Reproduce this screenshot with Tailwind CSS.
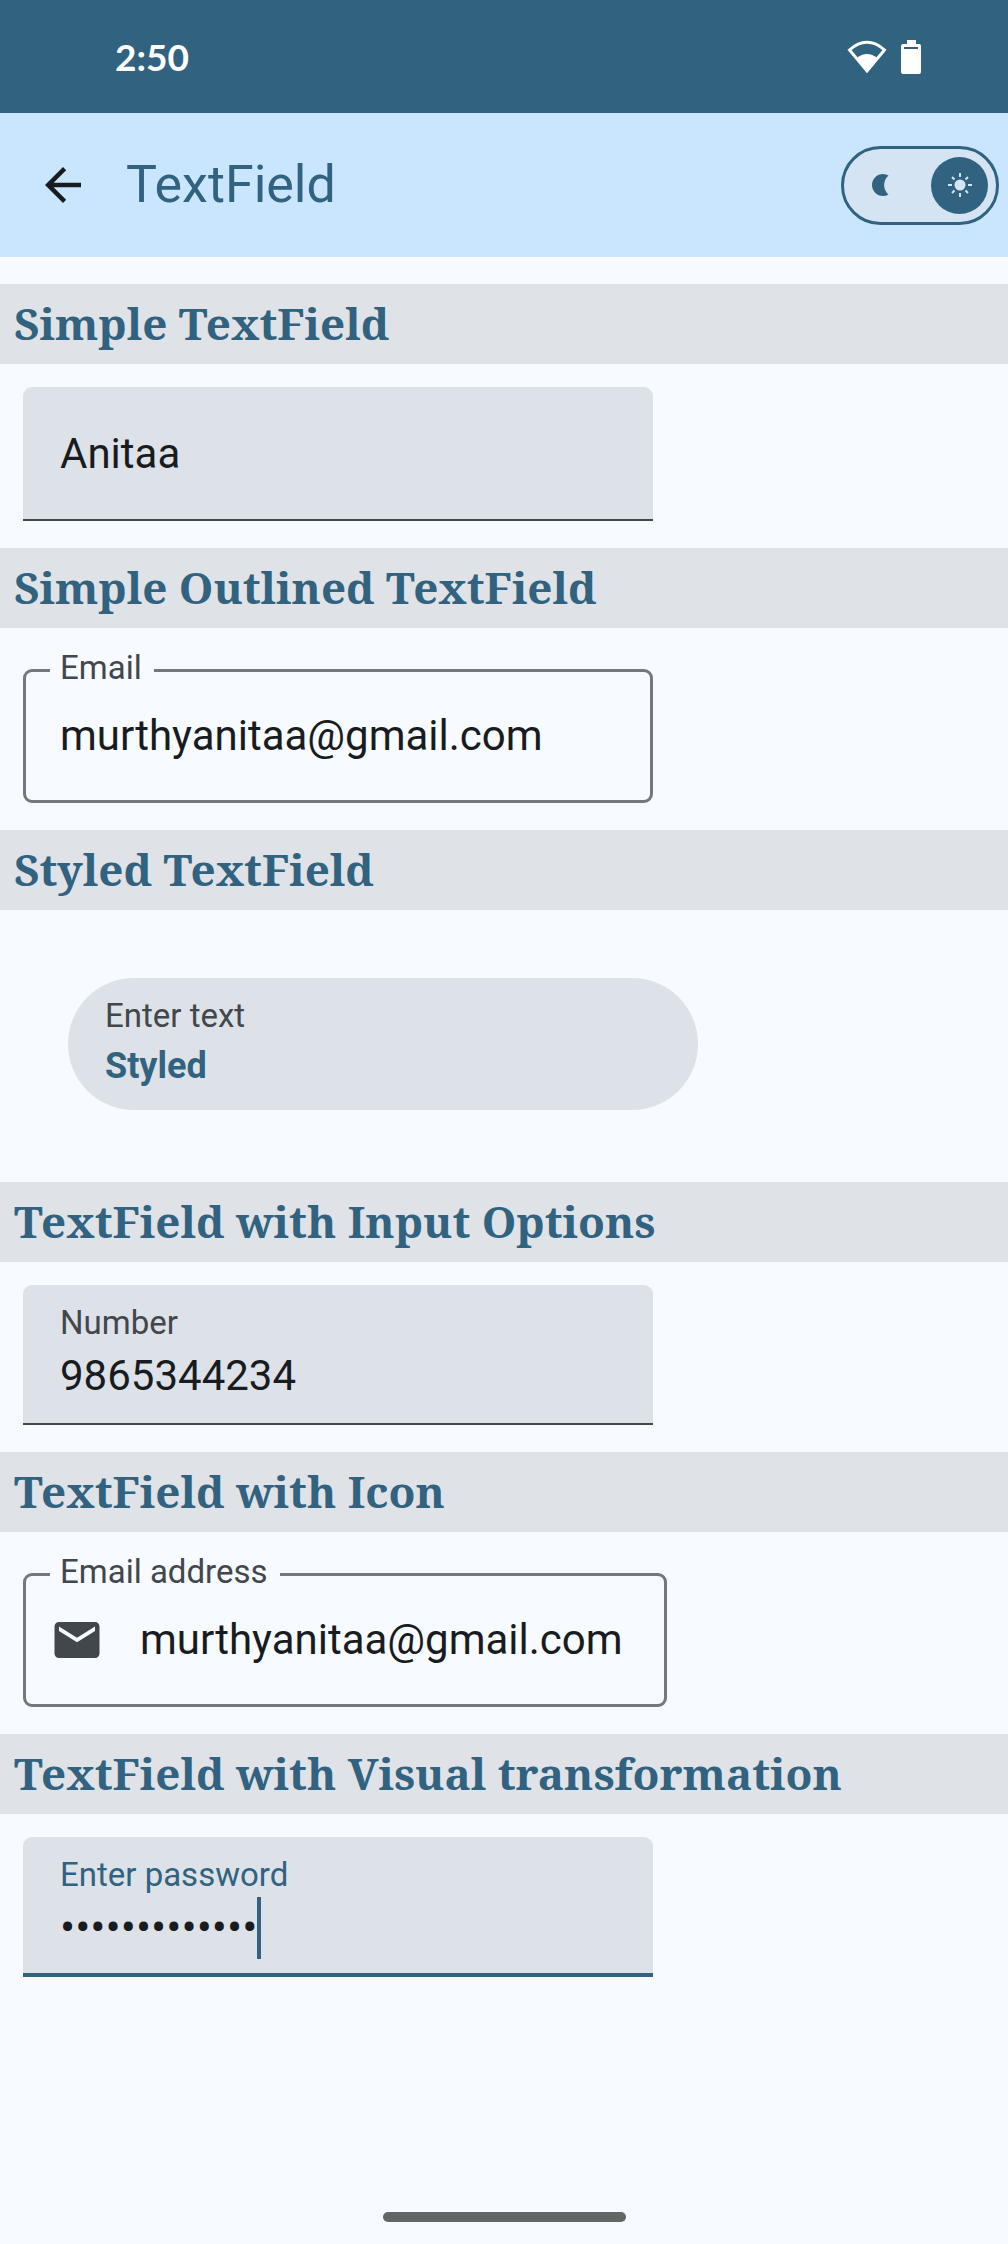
<!DOCTYPE html>
<html lang="en">
<head>
<meta charset="utf-8">
<meta name="viewport" content="width=device-width, initial-scale=1">
<title>TextField</title>
<script src="https://cdn.jsdelivr.net/npm/@tailwindcss/browser@4"></script>
</head>
<body class="flex min-h-screen flex-col bg-[#f7faff] font-['Roboto',sans-serif] text-[#181c20]">

  <!-- System status bar -->
  <div class="flex h-[113px] items-center justify-between bg-[#316380] pr-[86px] pl-[115px] text-white">
    <span class="font-['Lato',sans-serif] text-[37px] leading-[40px] font-bold">2:50</span>
    <div class="flex items-center gap-3">
      <svg class="h-[36px] w-[42px]" viewBox="0 0 42 36" fill="none" aria-hidden="true">
        <path d="M3.500 11Q12 3.300 21 3.300T38.500 11L21 32Z" stroke="currentColor" stroke-width="3"/>
        <path d="M11 19Q15.500 15 21 15T31 19L21 32Z" fill="currentColor"/>
      </svg>
      <svg class="h-[36px] w-[22px]" viewBox="0 0 22 36" aria-hidden="true">
        <path fill="currentColor" fill-rule="evenodd" d="M7 1h9v4h3q2 0 2 2v26q0 2-2 2H3q-2 0-2-2V7q0-2 2-2h4zM4 8v2h14V8z"/>
      </svg>
    </div>
  </div>

  <!-- App bar -->
  <header class="flex h-[144px] items-center bg-[#cae6fe] pr-[9px] pl-[36px]">
    <button type="button" aria-label="Back" class="shrink-0">
      <svg class="size-[54px]" viewBox="0 0 24 24" fill="currentColor" aria-hidden="true"><path d="M20 11H7.830l5.590-5.590L12 4l-8 8 8 8 1.410-1.410L7.830 13H20v-2z"/></svg>
    </button>
    <h1 class="ml-[36px] text-[52px] leading-[64px] text-[#316380]">TextField</h1>
    <label class="ml-auto flex h-[79px] w-[158px] items-center justify-between rounded-full border-3 border-[#316380] bg-[#d4e4f3] pr-2 pl-[24px] text-[#316380]">
      <input type="checkbox" class="sr-only" checked aria-label="Light theme">
      <svg class="size-[24px]" viewBox="0 0 24 24" fill="currentColor" aria-hidden="true"><path d="M20.500 2.500Q18 1 15 1A11 11 0 0 0 15 23Q18 23 20.500 21.500A12.500 12.500 0 0 1 20.500 2.500Z"/></svg>
      <span class="flex size-[57px] items-center justify-center rounded-full bg-[#316380] text-[#d4e4f3]">
        <svg class="size-[26px]" viewBox="0 0 26 26" fill="none" stroke="currentColor" stroke-width="2" aria-hidden="true">
          <circle cx="13" cy="13" r="5.500" fill="currentColor" stroke="none"/>
          <path d="M13 1v4M13 21v4M1 13h4M21 13h4M5 5l2.500 2.500M18.500 18.500L21 21M5 21l2.500-2.500M18.500 7.500L21 5"/>
        </svg>
      </span>
    </label>
  </header>

  <main class="flex flex-col gap-[27px] pt-[27px]">
    <section>
      <h2 class="bg-[#dfe2e7] px-[14px] pb-[2px] text-[44px] leading-[78px] font-bold text-[#316380] font-['Noto_Serif','Liberation_Serif',serif]">Simple TextField</h2>
      <div class="mt-[23px] ml-[23px] flex h-[134px] w-[630px] max-w-full items-center rounded-t-[9px] border-b-2 border-[#42474c] bg-[#dde2e9] px-[37px] pt-[2px]">
        <input type="text" aria-label="Name" value="Anitaa" class="w-full bg-transparent text-[42px] leading-[54px] outline-none">
      </div>
    </section>

    <section>
      <h2 class="bg-[#dfe2e7] px-[14px] pb-[2px] text-[44px] leading-[78px] font-bold text-[#316380] font-['Noto_Serif','Liberation_Serif',serif]">Simple Outlined TextField</h2>
      <div class="relative mt-[41px] ml-[23px] flex h-[134px] w-[630px] max-w-full items-center rounded-[9px] border-3 border-[#74787d] px-[34px]">
        <label for="email" class="absolute -top-[22px] left-[24px] bg-[#f7faff] pr-[12px] pl-[10px] text-[33px] leading-[36px] text-[#42474c]">Email</label>
        <input id="email" type="email" value="murthyanitaa@gmail.com" class="w-full bg-transparent text-[42px] leading-[54px] outline-none">
      </div>
    </section>

    <section>
      <h2 class="bg-[#dfe2e7] px-[14px] pb-[2px] text-[44px] leading-[78px] font-bold text-[#316380] font-['Noto_Serif','Liberation_Serif',serif]">Styled TextField</h2>
      <div class="mt-[68px] mb-[45px] ml-[68px] flex h-[132px] w-[630px] max-w-full flex-col justify-center rounded-full bg-[#dde2e9] px-[37px]">
        <label for="styled" class="text-[33px] leading-[44px] text-[#42474c]">Enter text</label>
        <input id="styled" type="text" value="Styled" class="w-full bg-transparent text-[36px] leading-[56px] font-bold text-[#316380] outline-none">
      </div>
    </section>

    <section>
      <h2 class="bg-[#dfe2e7] px-[14px] pb-[2px] text-[44px] leading-[78px] font-bold text-[#316380] font-['Noto_Serif','Liberation_Serif',serif]">TextField with Input Options</h2>
      <div class="mt-[23px] ml-[23px] flex h-[140px] w-[630px] max-w-full flex-col justify-center rounded-t-[9px] border-b-2 border-[#42474c] bg-[#dde2e9] px-[37px]">
        <label for="number" class="text-[33px] leading-[44px] text-[#42474c]">Number</label>
        <input id="number" type="text" inputmode="numeric" value="9865344234" class="w-full bg-transparent text-[42px] leading-[62px] outline-none">
      </div>
    </section>

    <section>
      <h2 class="bg-[#dfe2e7] px-[14px] pb-[2px] text-[44px] leading-[78px] font-bold text-[#316380] font-['Noto_Serif','Liberation_Serif',serif]">TextField with Icon</h2>
      <div class="relative mt-[41px] ml-[23px] flex h-[134px] w-[644px] max-w-full items-center gap-[36px] rounded-[9px] border-3 border-[#74787d] px-[24px]">
        <label for="address" class="absolute -top-[22px] left-[24px] bg-[#f7faff] pr-[12px] pl-[10px] text-[33px] leading-[36px] text-[#42474c]">Email address</label>
        <svg class="size-[54px] shrink-0 text-[#42474c]" viewBox="0 0 24 24" fill="currentColor" aria-hidden="true"><path d="M20 4H4c-1.100 0-1.990.9-1.990 2L2 18c0 1.100.9 2 2 2h16c1.100 0 2-.9 2-2V6c0-1.100-.9-2-2-2zm0 4l-8 5-8-5V6l8 5 8-5v2z"/></svg>
        <input id="address" type="email" value="murthyanitaa@gmail.com" class="w-full min-w-0 bg-transparent text-[42px] leading-[54px] outline-none">
      </div>
    </section>

    <section>
      <h2 class="bg-[#dfe2e7] px-[14px] pb-[2px] text-[44px] leading-[78px] font-bold text-[#316380] font-['Noto_Serif','Liberation_Serif',serif]">TextField with Visual transformation</h2>
      <div class="mt-[23px] ml-[23px] flex h-[140px] w-[630px] max-w-full flex-col justify-center rounded-t-[9px] border-b-4 border-[#316380] bg-[#dde2e9] px-[37px] pt-[2px]">
        <label for="password" class="text-[33px] leading-[44px] text-[#316380]">Enter password</label>
        <div class="flex items-center">
          <input id="password" type="password" value="anitaa1234567" class="[field-sizing:content] bg-transparent text-[45px] leading-[62px] outline-none">
          <span class="h-[62px] w-1 bg-[#316380]"></span>
        </div>
      </div>
    </section>
  </main>

  <!-- Gesture navigation handle -->
  <div class="mx-auto mt-auto mb-[22px] h-[10px] w-[243px] rounded-full bg-[#636666]"></div>
</body>
</html>
